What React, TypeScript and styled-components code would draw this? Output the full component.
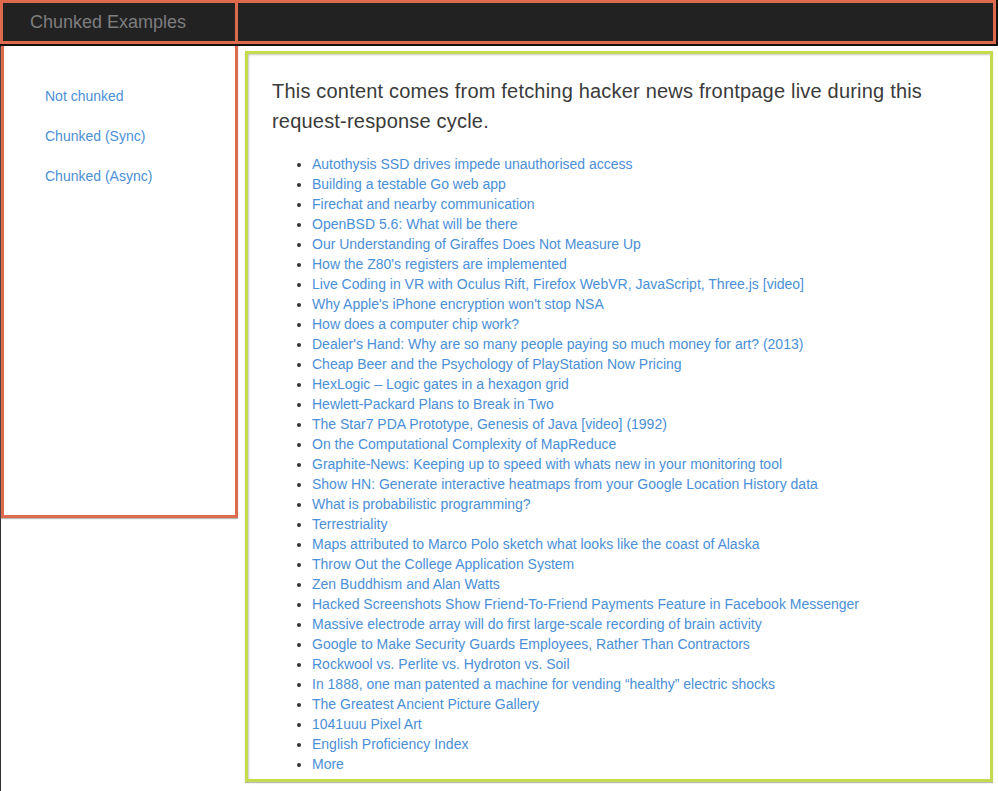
import React from "react";
import styled, { createGlobalStyle } from "styled-components";

const stories = [
  "Autothysis SSD drives impede unauthorised access",
  "Building a testable Go web app",
  "Firechat and nearby communication",
  "OpenBSD 5.6: What will be there",
  "Our Understanding of Giraffes Does Not Measure Up",
  "How the Z80's registers are implemented",
  "Live Coding in VR with Oculus Rift, Firefox WebVR, JavaScript, Three.js [video]",
  "Why Apple's iPhone encryption won't stop NSA",
  "How does a computer chip work?",
  "Dealer's Hand: Why are so many people paying so much money for art? (2013)",
  "Cheap Beer and the Psychology of PlayStation Now Pricing",
  "HexLogic – Logic gates in a hexagon grid",
  "Hewlett-Packard Plans to Break in Two",
  "The Star7 PDA Prototype, Genesis of Java [video] (1992)",
  "On the Computational Complexity of MapReduce",
  "Graphite-News: Keeping up to speed with whats new in your monitoring tool",
  "Show HN: Generate interactive heatmaps from your Google Location History data",
  "What is probabilistic programming?",
  "Terrestriality",
  "Maps attributed to Marco Polo sketch what looks like the coast of Alaska",
  "Throw Out the College Application System",
  "Zen Buddhism and Alan Watts",
  "Hacked Screenshots Show Friend-To-Friend Payments Feature in Facebook Messenger",
  "Massive electrode array will do first large-scale recording of brain activity",
  "Google to Make Security Guards Employees, Rather Than Contractors",
  "Rockwool vs. Perlite vs. Hydroton vs. Soil",
  "In 1888, one man patented a machine for vending “healthy” electric shocks",
  "The Greatest Ancient Picture Gallery",
  "1041uuu Pixel Art",
  "English Proficiency Index",
  "More",
];

const navLinks = ["Not chunked", "Chunked (Sync)", "Chunked (Async)"];

function App() {
  return (
    <>
      <GlobalStyle />
      <HeaderBar>
        <Header>
          <Brand>Chunked Examples</Brand>
        </Header>
      </HeaderBar>
      <Body>
        <Sidebar>
          {navLinks.map((l) => (
            <NavLink key={l} href="#">
              {l}
            </NavLink>
          ))}
        </Sidebar>
        <Main>
          <Intro>
            This content comes from fetching hacker news frontpage live during
            this request-response cycle.
          </Intro>
          <StoryList>
            {stories.map((s) => (
              <li key={s}>
                <StoryLink href="#">{s}</StoryLink>
              </li>
            ))}
          </StoryList>
        </Main>
      </Body>
    </>
  );
}

export default App;

const GlobalStyle = createGlobalStyle`
  body {
    margin: 0;
    background: #fff;
    font-family: "Liberation Sans", Arial, sans-serif;
  }
`;

const orange = "#dd6a4d";
const blue = "#4a8fd8";

const HeaderBar = styled.div`
  background: #111;
  padding: 0 2px 2px 0;
`;

const Header = styled.div`
  display: flex;
  height: 44px;
  box-sizing: border-box;
  background: #222;
  border: 3px solid ${orange};
  border-left: 0;
`;

const Brand = styled.div`
  width: 238px;
  box-sizing: border-box;
  border-left: 3px solid ${orange};
  border-right: 3px solid ${orange};
  padding-left: 27px;
  font-size: 18px;
  line-height: 38px;
  color: #7e7e7e;
`;

const Body = styled.div`
  display: flex;
  align-items: flex-start;
  border-left: 1px solid #2e2e2e;
  min-height: 745px;
`;

const Sidebar = styled.nav`
  width: 237px;
  height: 472px;
  box-sizing: border-box;
  border: 3px solid ${orange};
  border-top: 0;
  box-shadow: 0 1px 1px #b8b8b8;
  padding: 40px 0 0 41px;
  display: flex;
  flex-direction: column;
`;

const NavLink = styled.a`
  font-size: 14px;
  line-height: 20px;
  margin-bottom: 20px;
  color: ${blue};
  text-decoration: none;
`;

const Main = styled.main`
  width: 748px;
  box-sizing: border-box;
  margin: 5px 0 0 7px;
  border: 3px solid #c6db4b;
  box-shadow: inset 1px 1px 2px #c8c8c8, 0 1px 1px #b8b8b8;
  padding: 22px 24px 5px;
`;

const Intro = styled.p`
  margin: 0 0 18px;
  font-size: 20px;
  line-height: 30px;
  letter-spacing: 0.2px;
  color: #3a3a3a;
`;

const StoryList = styled.ul`
  margin: 0;
  padding-left: 40px;
  font-size: 14px;
  line-height: 20px;
  color: #333;
`;

const StoryLink = styled.a`
  color: ${blue};
  text-decoration: none;
`;
